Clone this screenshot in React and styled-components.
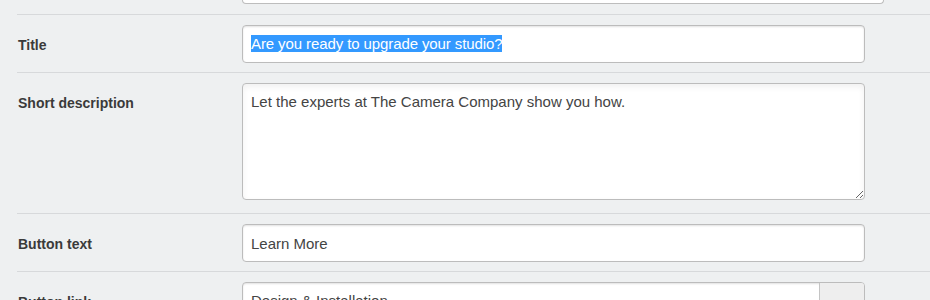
import React from "react";
import styled, { createGlobalStyle, css } from "styled-components";

const Global = createGlobalStyle`
  html, body {
    margin: 0;
    padding: 0;
    background: #eef0f1;
    font-family: "Liberation Sans", Arial, sans-serif;
    overflow: hidden;
  }
`;

const Form = styled.div`
  padding-left: 17px;
  height: 300px;
  overflow: hidden;
`;

const PrevTail = styled.div`
  margin-left: 225px;
  width: 640px;
  height: 3px;
  border: 1px solid #bdbdbd;
  border-top: none;
  border-radius: 0 0 4px 4px;
  background: #fff;
  margin-bottom: 10px;
`;

const Row = styled.div`
  display: flex;
  align-items: flex-start;
  border-top: 1px solid #d7d9db;
  padding: ${(p) => (p.$tall ? "10px 0 13px" : "10px 0 9px")};
`;

const Label = styled.div`
  width: 224px;
  padding: 12px 0 0 1px;
  font-size: 14px;
  line-height: 16px;
  font-weight: bold;
  color: #3a3a3a;
`;

const boxStyle = css`
  box-sizing: border-box;
  width: 623px;
  margin: 0;
  border: 1px solid #bcbcbc;
  border-radius: 4px;
  background: #fff;
  box-shadow: inset 0 1px 2px rgba(0, 0, 0, 0.12);
  font-family: "Liberation Sans", Arial, sans-serif;
  font-size: 15px;
  line-height: 18px;
  color: #444;
  outline: none;
`;

const FakeInput = styled.div`
  ${boxStyle}
  height: 38px;
  padding: 9px 8px;
  white-space: nowrap;
`;

const Selected = styled.span`
  background: #3399ff;
  color: #fff;
  letter-spacing: -0.1px;
`;

const Input = styled.input`
  ${boxStyle}
  height: 38px;
  padding: 9px 8px;
  display: block;
`;

const TextArea = styled.textarea`
  ${boxStyle}
  height: 117px;
  padding: 9px 8px;
  display: block;
  box-shadow: inset 0 3px 6px rgba(0, 0, 0, 0.06);
`;

const SelectBox = styled.div`
  ${boxStyle}
  display: flex;
  height: 38px;
  overflow: hidden;
`;

const SelectText = styled.div`
  flex: 1;
  padding: 9px 8px;
`;

const SelectButton = styled.div`
  width: 44px;
  border-left: 1px solid #c4c4c4;
  background: #eeeeee;
`;

export default function App() {
  return (
    <>
      <Global />
      <Form>
        <PrevTail />
        <Row>
          <Label>Title</Label>
          <FakeInput>
            <Selected>Are you ready to upgrade your studio?</Selected>
          </FakeInput>
        </Row>
        <Row $tall>
          <Label>Short description</Label>
          <TextArea defaultValue="Let the experts at The Camera Company show you how." />
        </Row>
        <Row>
          <Label>Button text</Label>
          <Input defaultValue="Learn More" />
        </Row>
        <Row>
          <Label>Button link</Label>
          <SelectBox>
            <SelectText>Design &amp; Installation</SelectText>
            <SelectButton />
          </SelectBox>
        </Row>
      </Form>
    </>
  );
}
